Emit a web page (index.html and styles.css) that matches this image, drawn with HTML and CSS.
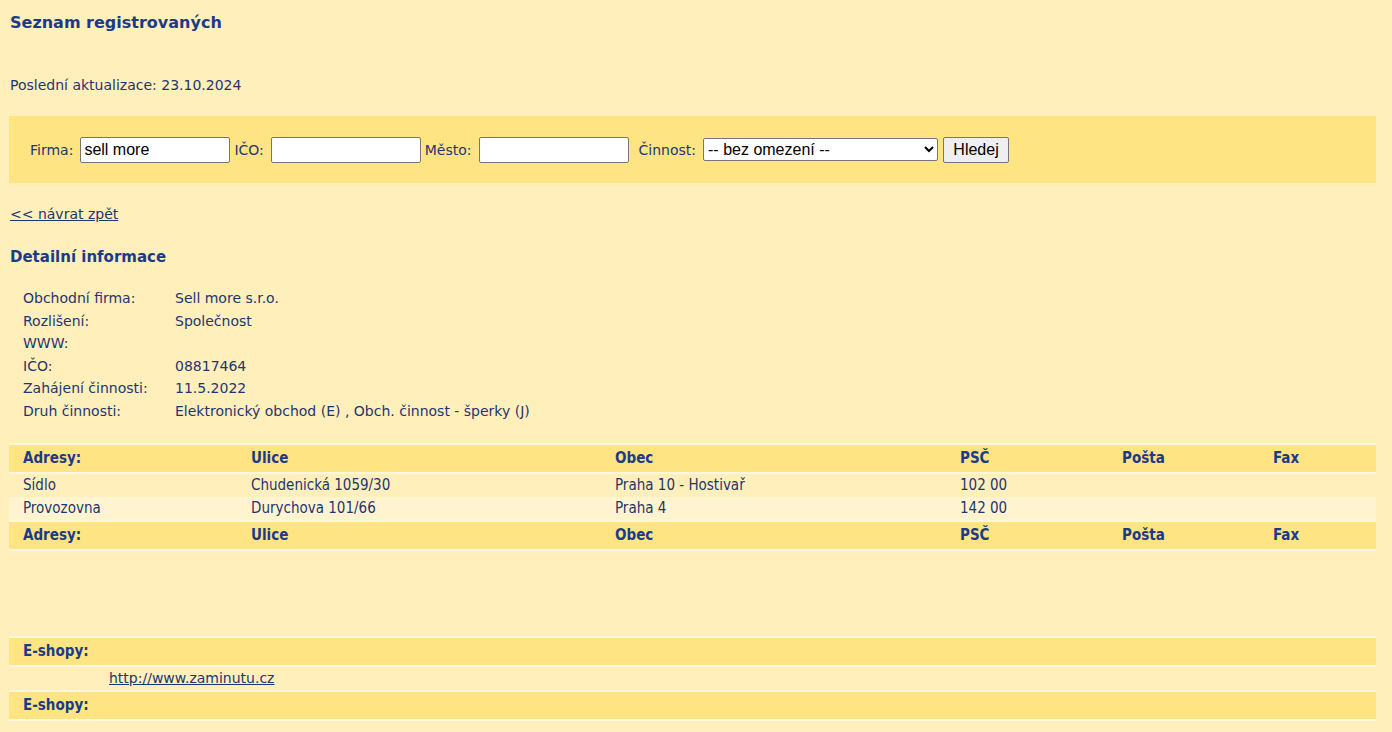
FILE: index.html
```html
<!DOCTYPE html>
<html lang="cs">
<head>
<meta charset="utf-8">
<title>Seznam registrovaných</title>
<link rel="stylesheet" href="styles.css">
</head>
<body>
<div class="page">
  <h1 class="title">Seznam registrovaných</h1>
  <p class="updated">Poslední aktualizace: 23.10.2024</p>

  <form class="search">
    <label class="lbl">Firma:</label>
    <input class="field" type="text" value="sell more">
    <label class="lbl">IČO:</label>
    <input class="field" type="text" value="">
    <label class="lbl">Město:</label>
    <input class="field" type="text" value="">
    <label class="lbl lbl-gap">Činnost:</label>
    <select class="select"><option>-- bez omezení --</option></select>
    <button class="btn" type="button">Hledej</button>
  </form>

  <a class="back" href="#">&lt;&lt; návrat zpět</a>

  <h2 class="subtitle">Detailní informace</h2>

  <div class="details">
    <div class="dl">Obchodní firma:</div><div class="dv">Sell more s.r.o.</div>
    <div class="dl">Rozlišení:</div><div class="dv">Společnost</div>
    <div class="dl">WWW:</div><div class="dv"></div>
    <div class="dl">IČO:</div><div class="dv">08817464</div>
    <div class="dl">Zahájení činnosti:</div><div class="dv">11.5.2022</div>
    <div class="dl">Druh činnosti:</div><div class="dv">Elektronický obchod (E) , Obch. činnost - šperky (J)</div>
  </div>

  <table class="grid addr">
    <colgroup>
      <col class="c1"><col class="c2"><col class="c3"><col class="c4"><col class="c5"><col class="c6">
    </colgroup>
    <tr class="head"><th>Adresy:</th><th>Ulice</th><th>Obec</th><th>PSČ</th><th>Pošta</th><th>Fax</th></tr>
    <tr class="row"><td>Sídlo</td><td>Chudenická 1059/30</td><td>Praha 10 - Hostivař</td><td>102 00</td><td></td><td></td></tr>
    <tr class="row alt"><td>Provozovna</td><td>Durychova 101/66</td><td>Praha 4</td><td>142 00</td><td></td><td></td></tr>
    <tr class="head"><th>Adresy:</th><th>Ulice</th><th>Obec</th><th>PSČ</th><th>Pošta</th><th>Fax</th></tr>
  </table>

  <table class="grid shops">
    <tr class="head"><th>E-shopy:</th></tr>
    <tr class="row"><td class="shop"><a href="#">http://www.zaminutu.cz</a></td></tr>
    <tr class="head"><th>E-shopy:</th></tr>
  </table>
</div>
</body>
</html>
```

FILE: styles.css
```css
html, body {
  margin: 0;
  padding: 0;
  background: #feefbb;
}
body {
  font-family: "DejaVu Sans", Verdana, sans-serif;
  font-size: 14px;
  color: #1f3570;
}
.page {
  padding: 0 16px 20px 9px;
}
.title {
  margin: 0;
  padding: 13px 0 0 1px;
  font-size: 16px;
  line-height: 19px;
  font-weight: bold;
  color: #1c3b87;
}
.updated {
  margin: 0;
  padding: 45px 0 0 1px;
  line-height: 17px;
}
.search {
  margin-top: 22px;
  background: #ffe484;
  height: 67px;
  display: flex;
  align-items: center;
  padding-left: 21px;
  box-sizing: border-box;
}
.lbl {
  margin-right: 7px;
}
.lbl-gap {
  margin-left: 6px;
}
.field {
  width: 150px;
  height: 26px;
  box-sizing: border-box;
  border: 1px solid #767676;
  border-radius: 2px;
  background: #fff;
  font-family: "Liberation Sans", Arial, sans-serif;
  font-size: 16px;
  padding: 1px 3px;
  margin: 0 4px 0 0;
  color: #000;
}
.select {
  width: 235px;
  height: 23px;
  box-sizing: border-box;
  border: 1px solid #767676;
  border-radius: 2px;
  background: #fff;
  font-family: "Liberation Sans", Arial, sans-serif;
  font-size: 16px;
  color: #000;
  margin: 0 5px 0 0;
}
.btn {
  height: 26px;
  width: 66px;
  box-sizing: border-box;
  border: 1px solid #767676;
  border-radius: 2px;
  background: #efefef;
  font-family: "Liberation Sans", Arial, sans-serif;
  font-size: 16px;
  color: #000;
  padding: 0;
}
.back {
  display: inline-block;
  margin: 23px 0 0 1px;
  line-height: 17px;
  color: #1f3570;
}
.subtitle {
  margin: 0;
  padding: 25px 0 0 1px;
  font-size: 15px;
  line-height: 19px;
  font-weight: bold;
  color: #1c3b87;
}
.details {
  display: grid;
  grid-template-columns: 152px 1fr;
  grid-auto-rows: 22.6px;
  padding: 20px 0 0 14px;
  line-height: 22px;
}
.grid {
  width: 100%;
  border-collapse: collapse;
  font-family: "DejaVu Sans Condensed", "DejaVu Sans", Tahoma, sans-serif;
  font-size: 15px;
}
.addr {
  margin-top: 20px;
  table-layout: fixed;
}
.c1 { width: 242px; }
.c2 { width: 364px; }
.c3 { width: 345px; }
.c4 { width: 162px; }
.c5 { width: 151px; }
.head th {
  background: #ffe484;
  color: #1c3b87;
  font-weight: bold;
  text-align: left;
  height: 27px;
  padding: 0;
  border-top: 2px solid #fff8df;
  border-bottom: 2px solid #fff8df;
}
.head th:first-child,
.row td:first-child {
  padding-left: 14px;
}
.row td {
  height: 23px;
  padding: 0;
  vertical-align: middle;
}
.row.alt td {
  background: #fff4cf;
}
.shops {
  margin-top: 85px;
}
.shops .head th {
  padding-left: 14px;
}
.row td.shop {
  padding-left: 100px;
}
.shop a {
  font-family: "DejaVu Sans", Verdana, sans-serif;
  font-size: 14px;
  color: #1f3570;
}
```
